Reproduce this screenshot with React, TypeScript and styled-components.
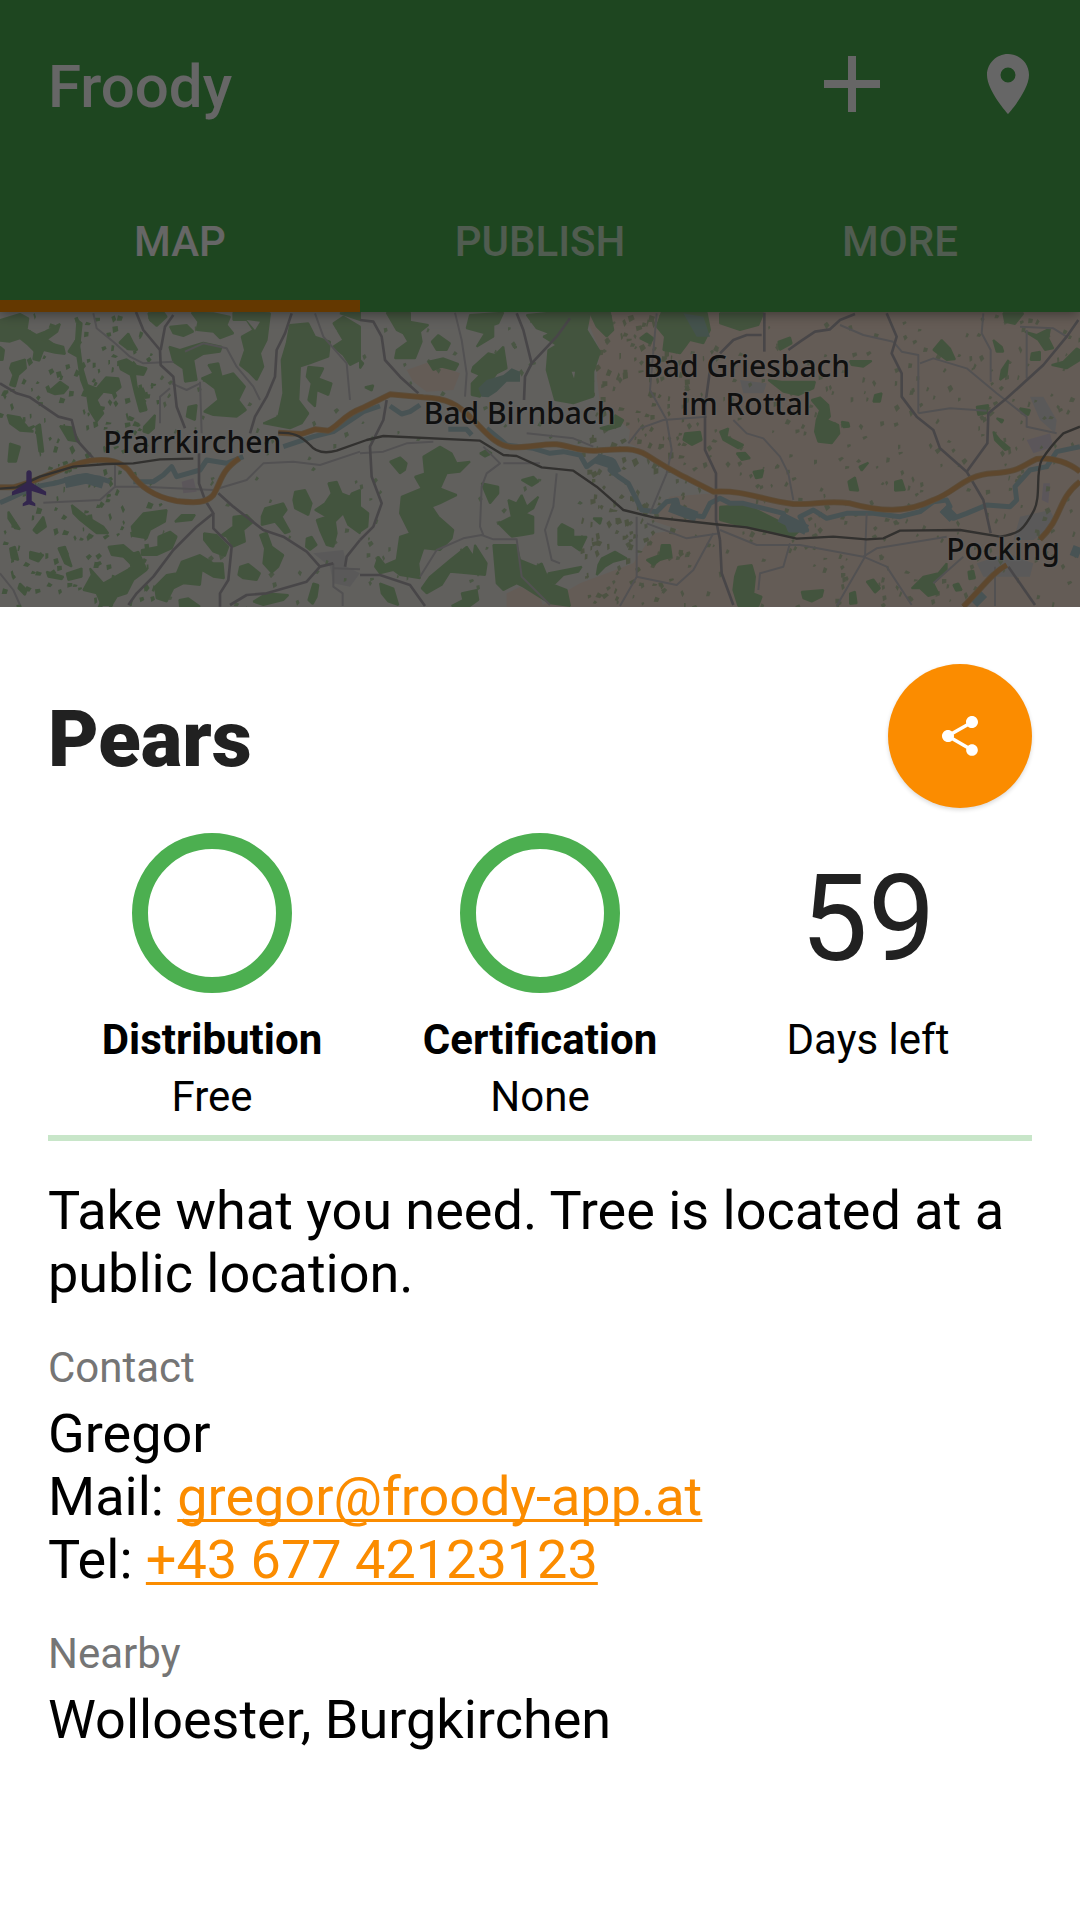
import React from "react";
import styled, { createGlobalStyle } from "styled-components";
import { MdAdd, MdPlace, MdShare } from "react-icons/md";

const GlobalStyle = createGlobalStyle`
  *, *::before, *::after { box-sizing: border-box; }
  body {
    margin: 0;
    background: #fff;
    color: #000;
    font-family: Roboto, "Noto Sans", sans-serif;
  }
  h1, h2, h3, p { margin: 0; font-weight: 400; }
  button { border: 0; padding: 0; background: none; font: inherit; color: inherit; cursor: pointer; }
`;

const Screen = styled.div`
  display: flex;
  flex-direction: column;
  min-height: 100vh;
`;

const Backdrop = styled.div`
  position: relative;
  display: flex;
  flex-direction: column;

  &::after {
    content: "";
    position: absolute;
    inset: 0;
    background: rgba(0, 0, 0, 0.6);
  }
`;

const AppBar = styled.header`
  background: #4caf50;
  color: #fff;
  box-shadow: 0 2px 12px rgba(0, 0, 0, 0.4);
  z-index: 0;
`;

const Toolbar = styled.div`
  display: flex;
  align-items: center;
  height: 168px;
  padding: 0 36px 0 48px;
`;

const AppTitle = styled.h1`
  flex: 1;
  padding-top: 6px;
  font-size: 60px;
  line-height: 72px;
  font-weight: 500;
`;

const Actions = styled.div`
  display: flex;
  gap: 48px;
`;

const IconButton = styled.button<{ $size: number }>`
  display: flex;
  align-items: center;
  justify-content: center;
  width: ${(p) => (p.$size > 72 ? 144 : 72)}px;
  height: 144px;
  font-size: ${(p) => p.$size}px;
`;

const Tabs = styled.nav`
  display: grid;
  grid-template-columns: repeat(3, 1fr);
`;

const Tab = styled.button<{ $active?: boolean }>`
  height: 144px;
  padding-top: 16px;
  border-bottom: 12px solid ${(p) => (p.$active ? "#fb8c00" : "transparent")};
  font-size: 42px;
  line-height: 48px;
  font-weight: 500;
  color: ${(p) => (p.$active ? "#fff" : "rgba(255, 255, 255, 0.7)")};
`;

const MapView = styled.svg`
  display: block;
  width: 100%;
  height: 295px;
  background: #f2efe9;
`;

const MapLabel = styled.text`
  font-family: "Noto Sans", "Open Sans", sans-serif;
  font-size: 90px;
  font-weight: 500;
  fill: #2a2a2a;
  stroke: rgba(255, 255, 255, 0.3);
  stroke-width: 8px;
  paint-order: stroke;
  text-anchor: middle;
`;

const Sheet = styled.main`
  flex: 1;
  padding: 57px 48px 48px;
  background: #fff;
`;

const SheetHeader = styled.div`
  display: flex;
  align-items: center;
  justify-content: space-between;
  margin-bottom: 25px;
`;

const EntryTitle = styled.h2`
  padding-top: 8px;
  font-size: 78px;
  line-height: 92px;
  font-weight: 900;
  color: #212121;
`;

const ShareButton = styled.button`
  display: flex;
  align-items: center;
  justify-content: center;
  width: 144px;
  height: 144px;
  border-radius: 50%;
  background: #fb8c00;
  color: #fff;
  font-size: 48px;
  box-shadow: 0 2px 4px rgba(0, 0, 0, 0.15);
`;

const Facts = styled.div`
  display: grid;
  grid-template-columns: repeat(3, 1fr);
  padding-bottom: 10px;
  border-bottom: 6px solid #c8e6c9;
`;

const Fact = styled.div`
  display: flex;
  flex-direction: column;
  align-items: center;
`;

const Ring = styled.div`
  width: 160px;
  height: 160px;
  margin-bottom: 18px;
  border: 16px solid #4caf50;
  border-radius: 50%;
`;

const Count = styled.div`
  display: flex;
  align-items: flex-end;
  height: 160px;
  margin-bottom: 18px;
  font-size: 120px;
  line-height: 148px;
  color: #212121;
`;

const FactText = styled.p<{ $bold?: boolean }>`
  font-size: 42px;
  line-height: 57px;
  font-weight: ${(p) => (p.$bold ? 700 : 400)};
`;

const BodyText = styled.p`
  font-size: 54px;
  line-height: 63px;
`;

const Section = styled.section`
  margin-top: 38px;
`;

const SectionLabel = styled.h3`
  margin-bottom: 10px;
  font-size: 42px;
  line-height: 49px;
  color: #757575;
`;

const Link = styled.a`
  color: #fb8c00;
  text-decoration: underline;
  text-decoration-thickness: 3px;
  text-underline-offset: 4px;
  text-decoration-skip-ink: none;
`;

/* Map geometry: three adjoining tiles, each 1080 units wide. */

const woods: string[][] = [
  [
    "0,60 60,42 85,55 80,88 110,105 135,95 180,72 172,95 140,118 165,135 110,160 85,135 60,115 30,125 0,122",
    "0,140 12,150 8,180 0,180",
    "35,190 75,178 78,205 55,225 45,260 30,255 40,225 30,205",
    "145,275 180,245 205,262 190,280 165,283",
    "110,110 150,130 190,140 195,162 165,158 130,150 118,182 100,178",
    "232,60 245,70 238,140 246,200 262,255 290,265 318,232 355,235 362,262 340,280 310,275 290,300 310,340 290,365 268,330 262,290 243,240 232,170 205,155 228,120",
    "358,128 385,100 400,130 412,150 385,148",
    "355,185 380,178 412,198 440,205 430,225 405,222 410,260 430,290 440,330 420,335 405,280 392,225 362,208",
    "445,40 490,36 500,50 470,78 450,60",
    "510,80 560,75 580,95 550,108 520,100",
    "575,38 640,40 690,50 680,75 700,100 660,115 640,95 590,90 595,65",
    "508,140 540,150 570,140 610,128 665,140 660,155 610,162 580,180 590,240 555,245 550,205 520,185",
    "625,195 655,190 665,230 700,220 735,260 715,300 738,330 710,350 640,345 612,335 655,300 645,265 605,235 640,220",
    "700,38 740,36 810,40 800,120 780,160 790,200 770,240 745,215 720,195 735,150 725,110 760,90 740,60 700,60",
    "870,75 925,70 945,110 990,125 985,170 930,190 900,200 895,300 925,340 905,370 870,385 790,370 835,350 850,280 845,180 860,130",
    "925,200 970,205 955,235 995,250 985,285 950,270 945,320 925,300 935,250 920,230",
    "1000,70 1030,50 1080,80 1080,180 1050,195 1030,165 1000,140 1030,120",
    "1020,40 1080,36 1080,60",
    "22,345 60,352 80,380 100,395 60,392 30,370",
    "108,380 120,372 130,455 118,455",
    "180,378 215,382 238,425 205,420",
    "30,430 60,440 48,485 25,485",
    "432,380 465,345 462,385 445,400 430,395",
    "565,320 590,315 585,360 560,350",
    "395,680 430,640 500,630 495,665 450,690 440,715 400,708",
    "525,665 545,645 585,645 575,660",
    "475,710 510,695 530,710 515,745 470,765 425,765 425,750 475,740",
    "325,740 370,735 400,760 415,755 440,810 400,840 380,880 350,890 335,915 305,915 290,880 250,870 275,825 270,805 310,850 400,800 370,770 335,765",
    "465,860 500,825 530,820 545,785 600,765 640,790 668,790 672,835 640,830 605,810 600,855 550,850 520,865 500,905 470,895",
    "612,700 650,705 685,740 675,768 640,755 612,720",
    "700,650 740,645 760,665 730,690 735,725 700,740 680,710 665,705 700,680",
    "785,650 795,625 850,610 860,630 845,650 870,695 855,700 825,665 785,675",
    "780,705 800,698 815,740 850,765 835,800 815,818 790,790 795,745",
    "720,800 745,792 780,820 770,840 730,835 715,825",
    "885,575 915,570 935,610 925,645 885,625 880,600",
    "985,550 1010,545 1025,580 1050,590 1055,580 1080,570 1080,700 1045,675 1030,640 1005,665 1010,700 1000,740 980,735 960,690 950,660 980,650 945,630 975,610 995,580",
    "920,715 935,710 950,735 930,750 918,740",
    "925,900 940,850 955,855 950,890 938,912",
    "760,905 800,880 865,885 850,900 790,915",
    "215,615 260,650 310,680 325,700 290,700 240,660 220,640",
    "25,635 60,688 45,685 25,655",
    "100,690 130,650 138,680 110,700",
    "175,745 195,740 215,800 195,790",
    "30,745 45,740 55,780 35,775",
    "90,755 130,765 115,785 90,775",
    "200,820 245,805 245,830 205,840",
    "140,815 190,830 185,838 145,830",
    "60,850 80,870 75,885 55,865",
    "538,900 565,895 600,920 540,920",
  ],
  [
    "80,38 150,38 150,65 205,75 180,95 185,125 165,175 105,175 110,150 145,125 130,100 110,90",
    "215,125 235,105 270,130 260,150 230,150",
    "205,185 250,175 295,192 285,210 245,200 220,210",
    "330,45 430,38 415,70 400,75 400,110 350,140 375,100 320,85",
    "340,200 385,160 405,165 430,140 440,205 410,220 385,255 360,290 335,285 335,250 360,225 335,215",
    "500,45 570,38 690,38 680,90 720,155 700,215 700,290 640,310 585,300 560,210 565,150 590,135 550,110 570,100 530,85",
    "690,38 750,38 760,90 740,110 710,80",
    "840,115 860,100 880,115 870,130",
    "905,38 1040,38 1050,90 1030,130 990,120 960,160 910,150 915,110 890,80",
    "90,485 120,472 140,490 135,510 120,520",
    "190,470 240,440 275,460 290,490 330,485 300,515 260,520 240,565 290,585 240,610 215,620 235,650 280,690 275,715 240,750 190,745 175,790 180,835 120,825 100,810 60,820 45,800 55,770 75,795 110,780 120,710 150,700 120,640 125,590 185,565 165,530 195,520",
    "365,550 415,560 415,580 390,610 375,575",
    "485,540 520,530 535,545 515,558",
    "360,460 380,450 395,460 375,470",
    "445,600 470,610 485,585 500,620 535,590 520,625 495,640 520,650 520,700 490,705 455,710 415,670 455,650",
    "595,685 605,672 640,690 640,710 680,710 660,752 635,735 595,735",
    "185,865 210,830 270,780 320,740 340,770 345,735 380,790 375,825 320,820 270,815 245,855 200,880",
    "400,735 470,735 480,780 530,800 545,790 570,850 620,870 630,918 570,910 490,860 470,850 430,870 410,850",
    "305,880 350,870 355,900 330,918 275,918 310,900",
    "60,850 100,865 115,915 85,905 65,880",
    "725,775 765,755 800,775 760,785 735,800 710,825 715,795",
    "860,780 900,765 905,735 930,735 935,770 900,780 880,795",
    "565,820 665,800 655,815 610,825 585,850 560,845",
    "700,655 725,655 720,672",
    "720,385 755,375 765,345 790,360 780,378 740,390",
    "0,620 25,640 22,680 0,695",
    "975,400 1020,395 1025,420 995,435 970,420",
    "15,262 40,256 35,272",
    "0,180 10,190 0,205",
  ],
  [
    "0,40 130,40 115,75 60,90 0,70",
    "175,125 210,112 215,130 180,150",
    "390,183 455,183 430,200 395,195",
    "145,240 185,245 285,245 280,265 235,285 190,275",
    "275,300 300,292 325,315 330,350 320,360 355,375 358,400 335,430 295,425 285,395 290,360 300,330",
    "365,365 385,368 388,380 370,382",
    "640,150 665,120 690,145 705,178 680,180",
    "915,95 950,105 990,85 985,115 1000,145 975,150 955,120",
    "935,160 960,155 960,180 932,180",
    "995,195 1030,185 1070,145 1080,150 1080,180 1040,205",
    "820,120 845,140 850,155 830,155",
    "845,210 865,180 860,225 840,240",
    "850,40 910,40 885,72 855,65",
    "770,320 805,315 800,340 775,345",
    "385,545 405,532 415,572 390,570",
    "525,545 545,540 555,570 525,572",
    "0,395 25,385 20,410 70,435 55,445 10,420",
    "50,460 75,458 90,475 65,480",
    "100,515 130,510 125,532 108,535",
    "0,620 80,615 180,665 240,690 220,710 110,690 0,660",
    "55,800 95,795 105,830 100,880 125,890 115,918 55,918 40,870 45,830",
    "245,875 310,870 305,890 275,905 250,895",
    "440,845 460,838 480,865 465,878",
    "575,865 610,830 655,820 680,790 680,810 640,850 655,880 625,888 600,865",
    "700,855 715,850 725,870 708,872",
    "745,815 760,812 765,835 748,838",
    "390,880 405,875 410,910 390,912",
    "465,285 485,280 480,305 460,305",
    "418,500 445,488 425,512",
    "830,355 850,360 845,368",
    "820,395 840,420 870,445 855,450 825,420",
    "900,325 930,330 925,345 905,340",
  ],
];

const roads: string[][] = [
  [
    "M408,36 L430,90 480,150 482,195 520,230 530,320 555,385",
    "M520,45 L495,80 482,150",
    "M875,40 L855,100 830,150 825,230 800,290 765,350 750,400",
    "M0,250 L50,280 90,292 175,350 215,360 230,420 280,475",
    "M385,915 L410,880 460,830 520,750 590,680 640,640 615,600 597,550 597,460",
    "M640,640 L640,685 695,740 685,840 660,880 660,920",
    "M655,580 L700,620 790,690 850,710 920,755 960,800 920,845 800,880 740,885 690,915",
    "M960,800 L1000,790",
    "M1035,800 L1040,770 1080,720",
  ],
  [
    "M470,40 L490,90 515,190 495,230 492,300",
    "M630,55 L590,110 515,190",
    "M0,60 L40,65 65,110 75,180 120,230 175,280",
    "M80,300 L70,360 30,440 35,530 65,610 40,680 0,720",
    "M0,825 L60,825 150,855 195,918",
    "M1050,210 L1035,320 1035,450 1068,520 1068,660 1080,720",
  ],
  [
    "M0,160 L40,120 80,105 125,105",
    "M133,38 L133,155",
    "M405,42 L360,60 330,88 285,95 240,125 205,150",
    "M500,40 L530,110 515,160 545,220 545,290 590,350 640,390 660,445 740,515 790,600 812,700",
    "M1075,60 L1040,110 970,195 860,295 805,340 802,430 740,515",
    "M0,720 L5,820 40,915",
    "M865,800 L945,915",
  ],
];

const lanes: string[][] = [
  [
    "M280,40 L290,85 340,125 390,170 430,190 520,185",
    "M555,155 L610,130 680,145 710,200 760,260 780,300",
    "M600,245 L605,400",
    "M515,250 L560,270 600,250",
    "M480,370 L480,290 510,265",
    "M345,490 L345,560 300,600 130,608",
    "M345,560 L430,560 640,570 740,540 790,490 880,485 960,495 1080,455",
    "M0,820 L40,870 60,915",
    "M1000,790 L1000,860 1028,880 1028,918",
    "M1000,805 L1080,808",
    "M945,40 L970,110 1040,190 1050,300",
  ],
  [
    "M285,38 L305,120 320,220 315,290",
    "M0,460 L70,455 140,430 220,425",
    "M370,440 L420,490 380,520 365,560 360,680 370,705",
    "M590,520 L580,620 555,690 575,780 600,790",
    "M180,830 L230,750 310,715 365,705 400,718 470,718 485,830 570,915",
    "M500,400 L640,415 700,440",
    "M870,640 L920,520 935,450 920,360 870,270 890,40",
    "M805,430 L840,385 910,360 1040,350",
    "M830,650 L830,830 780,918",
    "M830,830 L950,855 1000,810 1060,700",
    "M860,670 L980,715 1080,700",
    "M430,490 L540,490",
  ],
  [
    "M360,75 L430,105 520,125",
    "M520,125 L545,155 595,165 595,340",
    "M600,190 L640,175 740,205 830,280 920,350 920,380 1010,400",
    "M790,40 L785,100 812,150 812,245",
    "M40,360 L80,400 130,415 180,470 205,520 220,600",
    "M595,340 L690,325 800,332",
    "M0,690 L110,735 240,735 430,770 500,800 575,915",
    "M440,640 L435,770 350,918",
    "M430,770 L470,745 680,710",
    "M210,730 L190,800 120,820 115,870",
    "M900,80 L1000,85 1040,110",
    "M920,235 L920,90",
    "M825,918 L825,800",
    "M640,850 L730,770",
  ],
];

/* Small deterministic patches that fill in hedgerows and fields. */
const makeSpecks = (count: number, seed: number, from: number, to: number, size: number) => {
  let s = seed;
  const next = () => {
    s = (s * 16807) % 2147483647;
    return s / 2147483647;
  };
  return Array.from({ length: count }, () => {
    const x = Math.round(from + next() * (to - from));
    const y = Math.round(40 + next() * 880);
    const w = Math.round(4 + next() * size);
    const h = Math.round(4 + next() * size);
    const k = Math.round(next() * 16 - 8);
    return `M${x},${y} l${w},${k} l${-k},${h} l${-w},${4 - k}z`;
  }).join("");
};

const specksWest = makeSpecks(230, 71, 0, 480, 12);
const specksMid = makeSpecks(130, 907, 480, 1750, 8);
const specksEast = makeSpecks(420, 4021, 1790, 3240, 9);
const heath = makeSpecks(160, 333, 1740, 2060, 13);

const river =
  "M0,608 C60,585 90,560 150,552 C200,545 230,520 270,530 L300,535 330,545 M400,545 L460,545 490,525 515,500 530,530 600,510 620,480 680,490 730,470 M850,440 L940,410 1000,395 1060,355 1090,335 1140,318 M1170,318 L1205,342 1230,335 1260,315 M1345,388 L1400,388 1415,405 M1460,385 L1520,435 1600,445 1650,460 1690,455 1740,465 1760,500 1800,470 1835,480 1830,510 1855,530 1885,550 1905,590 1925,630 1970,635 2000,605 2030,600 2040,640 2110,650 2130,610 2160,595 2190,610 2230,610 2290,625 2350,640 2370,690 2420,690 2400,650 2440,630 2480,655 2540,640 2620,640 2700,650 2760,635 2800,605 2840,600 2850,620 2830,635 2860,655 2900,640 2960,615 3030,620 3050,600 3045,560 3090,510 3140,500 3170,455 3240,440";

const mainRoad =
  "M0,562 L40,562 C130,540 180,500 270,482 C330,475 360,485 385,510 C420,560 460,590 530,603 C590,610 620,608 640,585 C665,545 660,515 718,475 M835,398 L905,402 945,388 985,392 C1020,375 1030,345 1085,325 L1170,283 1270,292 C1340,295 1370,310 1420,360 C1460,400 1490,440 1540,442 C1600,442 1630,430 1670,433 C1720,440 1740,455 1790,452 C1850,448 1900,440 1940,465 C2010,510 2040,525 2140,575 C2240,570 2280,600 2380,612 C2440,615 2480,600 2550,610 C2640,635 2720,640 2800,600 C2870,575 2890,525 2980,520 C3060,515 3060,500 3110,477 C3160,470 3210,490 3240,515 M3240,545 C3170,600 3190,650 3120,718 M3020,795 C2975,820 2950,860 2890,920";

const railway =
  "M0,566 L50,562 120,530 220,500 320,492 400,490 480,478 580,476 M835,398 C880,398 900,405 930,435 C950,460 980,460 1010,452 L1100,420 1150,408 1440,422 1510,465 1550,468 1625,502 1720,512 1790,560 1870,630 1960,652 2140,672 2240,682 2390,716 2500,710 2600,718 2650,715 2700,692 2880,690 3000,710 C3060,700 3070,690 3100,635 C3125,590 3105,520 3125,480 C3150,440 3180,410 3190,400 L3240,380";

function RegionMap() {
  return (
    <MapView viewBox="0 36 3240 885" preserveAspectRatio="xMidYMid slice" role="img" aria-label="Map of the Rottal region">
      <path
        fill="#fbe5d6"
        d="M1750,36 L3240,36 3240,920 1620,920 1740,850 1900,790 1960,700 2040,690 1950,660 2010,590 2140,580 2020,520 1930,450 1885,430 1890,390 1800,310 1790,230 1800,150z M1220,210 L1290,185 1380,220 1360,270 1280,275 1240,245z M1520,880 L1560,860 1620,890 1630,920 1520,920z"
      />
      <g fill="#e0dfdf">
        <path d="M3090,290 L3130,290 3170,360 3165,400 3120,360z M3060,650 L3150,630 3170,670 3100,720 3040,720z M940,760 L1030,750 1040,800 1080,820 1050,860 1000,850 990,800z M2220,240 L2300,250 2290,280 2230,280z M2930,790 L3020,760 3100,790 3090,830 2950,830z" />
        <path fill="#e4d8e2" d="M545,545 L580,535 590,575 550,580z M3080,420 L3150,400 3160,440 3100,460z M3130,550 L3150,550 3145,610 3125,600z" />
      </g>
      <path fill="#a9d29b" d={specksWest} />
      <path fill="#b9d6ab" d={specksMid} />
      <path fill="#c4d3ad" d={specksEast} />
      <path fill="#c0cfa6" d={heath} />
      {woods.map((tile, i) => (
        <g key={i} transform={`translate(${i * 1080})`} fill="#a9d29b" stroke="#a9d29b" strokeWidth="6" strokeLinejoin="bevel">
          {tile.map((points) => (
            <polygon key={points} points={points} />
          ))}
        </g>
      ))}
      <path fill="#f2efe9" d="M740,60 L780,65 765,90z M985,85 L1010,90 1000,110z M1715,215 L1725,215 1722,235z M1150,470 L1158,480 1150,488z" />
      <path fill="#aacdbf" d="M1445,290 L1435,265 1460,240 1510,225 1535,205 1560,215 1560,245 1520,245 1490,275 1465,292z M2050,40 L2110,50 2130,110 2090,110z" />
      <g fill="none" stroke="#b4cfd2" strokeLinejoin="round">
        <path d={river} strokeWidth="15" />
        <path d="M195,548 L260,535 310,550 M1790,475 L1835,490 1850,520 M2010,620 L2090,650 M2340,650 L2420,690 M2830,625 L2860,655 M3215,750 L3240,760 M2920,910 L2950,880" strokeWidth="32" />
      </g>
      {lanes.map((tile, i) => (
        <g key={i} transform={`translate(${i * 1080})`} fill="none" stroke="#cdcacc" strokeWidth="6" strokeLinejoin="round">
          {tile.map((d) => (
            <path key={d} d={d} />
          ))}
        </g>
      ))}
      {roads.map((tile, i) => (
        <g key={i} transform={`translate(${i * 1080})`} fill="none" stroke="#b4b0b4" strokeWidth="8" strokeLinejoin="round">
          {tile.map((d) => (
            <path key={d} d={d} />
          ))}
        </g>
      ))}
      <path d={mainRoad} fill="none" stroke="#e3c092" strokeWidth="18" strokeLinejoin="round" />
      <path d={mainRoad} fill="none" stroke="#eab170" strokeWidth="13" strokeLinejoin="round" />
      <path d={railway} fill="none" stroke="#7d7a76" strokeWidth="7" strokeLinejoin="round" />
      <g transform="translate(25 500) scale(5.4)" fill="#7f5fc0">
        <path d="M21 16v-2l-8-5V3.500c0-.830-.670-1.500-1.500-1.500S10 2.670 10 3.500V9l-8 5v2l8-2.500V19l-2 1.500V22l3.500-1 3.500 1v-1.500L13 19v-5.500l8 2.500z" />
      </g>
      <MapLabel x="577" y="458">Pfarrkirchen</MapLabel>
      <MapLabel x="1559" y="371">Bad Birnbach</MapLabel>
      <MapLabel x="2240" y="231">Bad Griesbach</MapLabel>
      <MapLabel x="2238" y="346">im Rottal</MapLabel>
      <MapLabel x="3009" y="781">Pocking</MapLabel>
    </MapView>
  );
}

export default function App() {
  return (
    <Screen>
      <GlobalStyle />
      <Backdrop>
        <AppBar>
          <Toolbar>
            <AppTitle>Froody</AppTitle>
            <Actions>
              <IconButton $size={96} aria-label="Add entry">
                <MdAdd />
              </IconButton>
              <IconButton $size={72} aria-label="My location">
                <MdPlace />
              </IconButton>
            </Actions>
          </Toolbar>
          <Tabs>
            <Tab $active>MAP</Tab>
            <Tab>PUBLISH</Tab>
            <Tab>MORE</Tab>
          </Tabs>
        </AppBar>
        <RegionMap />
      </Backdrop>
      <Sheet>
        <SheetHeader>
          <EntryTitle>Pears</EntryTitle>
          <ShareButton aria-label="Share">
            <MdShare />
          </ShareButton>
        </SheetHeader>
        <Facts>
          <Fact>
            <Ring />
            <FactText $bold>Distribution</FactText>
            <FactText>Free</FactText>
          </Fact>
          <Fact>
            <Ring />
            <FactText $bold>Certification</FactText>
            <FactText>None</FactText>
          </Fact>
          <Fact>
            <Count>59</Count>
            <FactText>Days left</FactText>
          </Fact>
        </Facts>
        <Section>
          <BodyText>Take what you need. Tree is located at a public location.</BodyText>
        </Section>
        <Section>
          <SectionLabel>Contact</SectionLabel>
          <BodyText>Gregor</BodyText>
          <BodyText>
            Mail: <Link href="mailto:gregor@froody-app.at">gregor@froody-app.at</Link>
          </BodyText>
          <BodyText>
            Tel: <Link href="tel:+4367742123123">+43 677 42123123</Link>
          </BodyText>
        </Section>
        <Section>
          <SectionLabel>Nearby</SectionLabel>
          <BodyText>Wolloester, Burgkirchen</BodyText>
        </Section>
      </Sheet>
    </Screen>
  );
}
